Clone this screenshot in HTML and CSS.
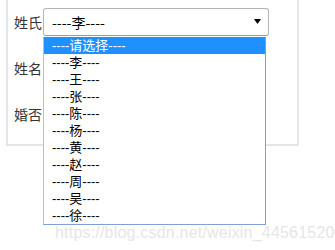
FILE: index.html
```html
<!DOCTYPE html>
<html lang="zh-CN">
<head>
<meta charset="UTF-8">
<title>下拉选择</title>
<link rel="stylesheet" href="styles.css">
</head>
<body>
<div class="panel">
    <div class="row">
        <label>姓氏</label>
        <div class="select">
            <span>----李----</span>
            <svg class="arrow" width="7" height="5" viewBox="0 0 7 5"><path d="M0 0H7L3.5 5Z" fill="#000"/></svg>
        </div>
    </div>
    <div class="row">
        <label>姓名</label>
        <div class="field"></div>
    </div>
    <div class="row">
        <label>婚否</label>
        <div class="field"></div>
    </div>
</div>

<!-- open list of the first select -->
<ul class="dropdown">
    <li class="active">----请选择----</li>
    <li>----李----</li>
    <li>----王----</li>
    <li>----张----</li>
    <li>----陈----</li>
    <li>----杨----</li>
    <li>----黄----</li>
    <li>----赵----</li>
    <li>----周----</li>
    <li>----吴----</li>
    <li>----徐----</li>
</ul>

<div class="watermark">https://blog.csdn.net/weixin_44561520</div>
</body>
</html>
```

FILE: styles.css
```css
body {
    margin: 0;
    padding: 0;
    background-color: #fff;
    color: #333;
    font-family: "Noto Sans CJK SC", "Noto Sans", sans-serif;
    font-size: 14px;
    width: 335px;
    height: 250px;
    overflow: hidden;
    position: relative;
}
.panel {
    margin-left: 6px;
    width: 257px;
    padding: 8px 28px 16px 4px;
    border: 2px solid #e6e6ea;
    border-top: none;
    display: flex;
    flex-direction: column;
    gap: 18px;
}
.row {
    display: flex;
    align-items: center;
    height: 28px;
}
.row label {
    width: 31px;
    padding-left: 2px;
    box-sizing: border-box;
    line-height: 28px;
}
.select {
    flex: 1;
    height: 28px;
    box-sizing: border-box;
    border: 1px solid #b4b4b4;
    border-bottom-color: #9a9a9a;
    border-radius: 3px;
    display: flex;
    align-items: center;
    justify-content: space-between;
    padding: 0 7px 0 8px;
    color: #000;
    font-size: 14px;
}
.arrow {
    margin-top: -1px;
}
.field {
    flex: 1;
    height: 28px;
}
.dropdown {
    position: absolute;
    left: 43px;
    top: 37px;
    width: 223px;
    box-sizing: border-box;
    margin: 0;
    padding: 0;
    list-style: none;
    background-color: #fff;
    border: 1px solid #7f9fd6;
    border-top: none;
    border-left-color: #a9c0e8;
}
.dropdown li {
    height: 17px;
    line-height: 18px;
    padding-left: 8px;
    font-family: "Liberation Sans", "Noto Sans CJK SC", sans-serif;
    font-size: 13px;
    color: #000;
}
.dropdown li.active {
    background-color: #1e90ff;
    color: #fff;
}
.watermark {
    position: absolute;
    left: 55px;
    top: 224px;
    font-family: "Liberation Sans", Arial, sans-serif;
    font-size: 16px;
    letter-spacing: 0.2px;
    color: #e6e6e6;
    white-space: nowrap;
}
```
